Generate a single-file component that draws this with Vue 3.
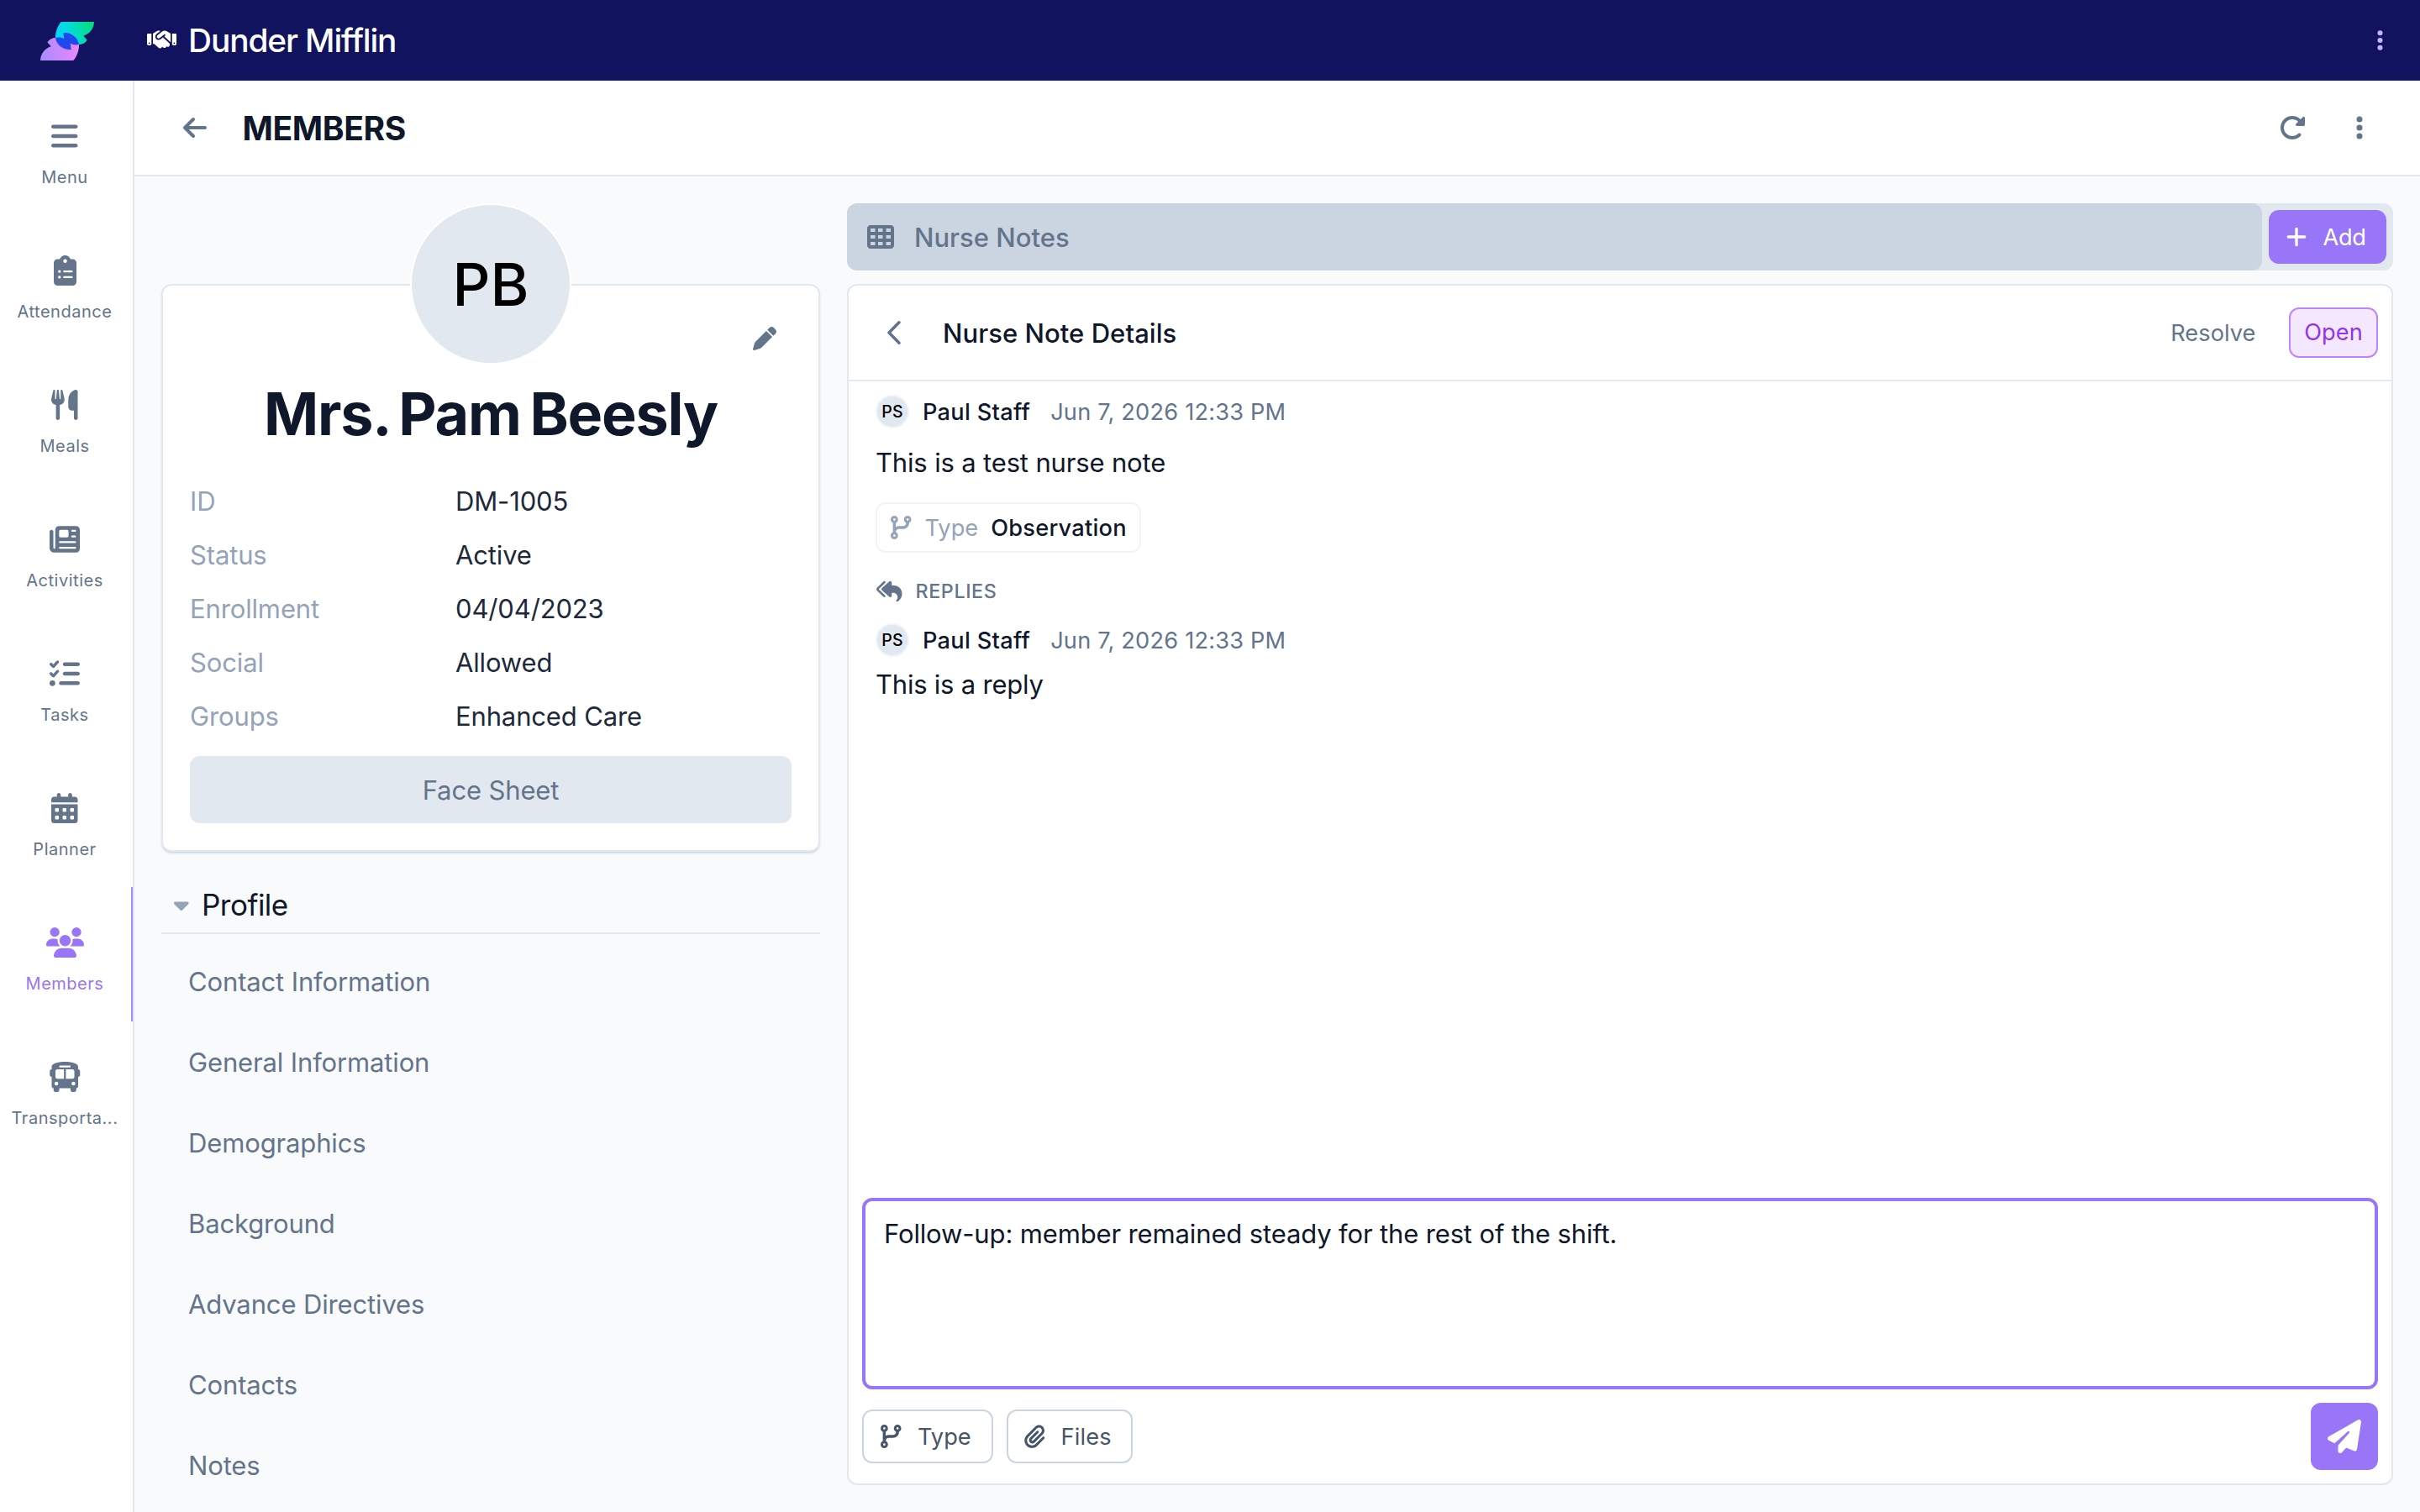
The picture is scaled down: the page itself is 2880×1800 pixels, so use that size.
<script setup>
import { h, ref } from 'vue'

// [width, path] on a 512 unit high grid
const icons = {
  bars: [448, 'M0 96C0 78.3 14.3 64 32 64l384 0c17.7 0 32 14.3 32 32s-14.3 32-32 32L32 128C14.3 128 0 113.7 0 96zM0 256c0-17.7 14.3-32 32-32l384 0c17.7 0 32 14.3 32 32s-14.3 32-32 32L32 288c-17.7 0-32-14.3-32-32zM448 416c0 17.7-14.3 32-32 32L32 448c-17.7 0-32-14.3-32-32s14.3-32 32-32l384 0c17.7 0 32 14.3 32 32z'],
  clipboard: [384, 'M192 0c-41.8 0-77.4 26.7-90.5 64L64 64C28.7 64 0 92.7 0 128L0 448c0 35.3 28.7 64 64 64l256 0c35.3 0 64-28.7 64-64l0-320c0-35.3-28.7-64-64-64l-37.5 0C269.4 26.7 233.8 0 192 0zm0 64a32 32 0 1 1 0 64 32 32 0 1 1 0-64zM72 272a24 24 0 1 1 48 0 24 24 0 1 1 -48 0zm104-16l128 0c8.8 0 16 7.2 16 16s-7.2 16-16 16l-128 0c-8.8 0-16-7.2-16-16s7.2-16 16-16zM72 368a24 24 0 1 1 48 0 24 24 0 1 1 -48 0zm88 0c0-8.8 7.2-16 16-16l128 0c8.8 0 16 7.2 16 16s-7.2 16-16 16l-128 0c-8.8 0-16-7.2-16-16z'],
  utensils: [448, 'M416 0C400 0 288 32 288 176l0 112c0 35.3 28.7 64 64 64l32 0 0 128c0 17.7 14.3 32 32 32s32-14.3 32-32l0-128 0-112 0-208c0-17.7-14.3-32-32-32zM64 16C64 7.8 57.9 1 49.7 .1S34.2 4.6 32.4 12.5L2.1 148.8C.7 155.1 0 161.5 0 167.9c0 45.9 35.1 83.6 80 87.7L80 480c0 17.7 14.3 32 32 32s32-14.3 32-32l0-224.4c44.9-4.1 80-41.8 80-87.7c0-6.4-.7-12.8-2.1-19.1L191.6 12.5c-1.8-8-9.3-13.3-17.4-12.4S160 7.8 160 16l0 134.2c0 5.4-4.4 9.8-9.8 9.8c-5.1 0-9.3-3.9-9.8-9L127.9 14.6C127.2 6.3 120.3 0 112 0s-15.2 6.3-15.9 14.6L83.7 151c-.5 5.1-4.7 9-9.8 9c-5.4 0-9.8-4.4-9.8-9.8L64 16z'],
  newspaper: [512, 'M96 96c0-35.3 28.7-64 64-64l288 0c35.3 0 64 28.7 64 64l0 320c0 35.3-28.7 64-64 64L80 480c-44.2 0-80-35.8-80-80L0 128c0-17.7 14.3-32 32-32s32 14.3 32 32l0 272c0 8.8 7.2 16 16 16s16-7.2 16-16L96 96zm64 24l0 80c0 13.3 10.7 24 24 24l112 0c13.3 0 24-10.7 24-24l0-80c0-13.3-10.7-24-24-24L184 96c-13.3 0-24 10.7-24 24zm208-8c0 8.8 7.2 16 16 16l48 0c8.8 0 16-7.2 16-16s-7.2-16-16-16l-48 0c-8.8 0-16 7.2-16 16zm0 96c0 8.8 7.2 16 16 16l48 0c8.8 0 16-7.2 16-16s-7.2-16-16-16l-48 0c-8.8 0-16 7.2-16 16zM160 304c0 8.8 7.2 16 16 16l256 0c8.8 0 16-7.2 16-16s-7.2-16-16-16l-256 0c-8.8 0-16 7.2-16 16zm0 96c0 8.8 7.2 16 16 16l256 0c8.8 0 16-7.2 16-16s-7.2-16-16-16l-256 0c-8.8 0-16 7.2-16 16z'],
  tasks: [512, 'M152.1 38.2c9.9 8.9 10.7 24 1.8 33.9l-72 80c-4.4 4.9-10.6 7.8-17.2 7.9s-12.9-2.4-17.6-7L7 113C-2.3 103.6-2.3 88.4 7 79s24.6-9.4 33.9 0l22.1 22.1 55.1-61.2c8.9-9.9 24-10.7 33.9-1.8zm0 160c9.9 8.9 10.7 24 1.8 33.9l-72 80c-4.4 4.9-10.6 7.8-17.2 7.9s-12.9-2.4-17.6-7L7 273c-9.4-9.4-9.4-24.6 0-33.9s24.6-9.4 33.9 0l22.1 22.1 55.1-61.2c8.9-9.9 24-10.7 33.9-1.8zM224 96c0-17.7 14.3-32 32-32l224 0c17.7 0 32 14.3 32 32s-14.3 32-32 32l-224 0c-17.7 0-32-14.3-32-32zm0 160c0-17.7 14.3-32 32-32l224 0c17.7 0 32 14.3 32 32s-14.3 32-32 32l-224 0c-17.7 0-32-14.3-32-32zM160 416c0-17.7 14.3-32 32-32l288 0c17.7 0 32 14.3 32 32s-14.3 32-32 32l-288 0c-17.7 0-32-14.3-32-32zM48 368a48 48 0 1 1 0 96 48 48 0 1 1 0-96z'],
  calendar: [448, 'M128 0c17.7 0 32 14.3 32 32l0 32 128 0 0-32c0-17.7 14.3-32 32-32s32 14.3 32 32l0 32 48 0c26.5 0 48 21.5 48 48l0 48L0 160l0-48C0 85.5 21.5 64 48 64l48 0 0-32c0-17.7 14.3-32 32-32zM0 192l448 0 0 272c0 26.5-21.5 48-48 48L48 512c-26.5 0-48-21.5-48-48L0 192zm64 80l0 32c0 8.8 7.2 16 16 16l32 0c8.8 0 16-7.2 16-16l0-32c0-8.8-7.2-16-16-16l-32 0c-8.8 0-16 7.2-16 16zm128 0l0 32c0 8.8 7.2 16 16 16l32 0c8.8 0 16-7.2 16-16l0-32c0-8.8-7.2-16-16-16l-32 0c-8.8 0-16 7.2-16 16zm144-16c-8.8 0-16 7.2-16 16l0 32c0 8.8 7.2 16 16 16l32 0c8.8 0 16-7.2 16-16l0-32c0-8.8-7.2-16-16-16l-32 0zM64 400l0 32c0 8.8 7.2 16 16 16l32 0c8.8 0 16-7.2 16-16l0-32c0-8.8-7.2-16-16-16l-32 0c-8.8 0-16 7.2-16 16zm144-16c-8.8 0-16 7.2-16 16l0 32c0 8.8 7.2 16 16 16l32 0c8.8 0 16-7.2 16-16l0-32c0-8.8-7.2-16-16-16l-32 0zm112 16l0 32c0 8.8 7.2 16 16 16l32 0c8.8 0 16-7.2 16-16l0-32c0-8.8-7.2-16-16-16l-32 0c-8.8 0-16 7.2-16 16z'],
  users: [640, 'M144 0a80 80 0 1 1 0 160A80 80 0 1 1 144 0zM512 0a80 80 0 1 1 0 160A80 80 0 1 1 512 0zM0 298.7C0 239.8 47.8 192 106.7 192l42.7 0c15.9 0 31 3.5 44.6 9.7c-1.3 7.2-1.9 14.7-1.9 22.3c0 38.2 16.8 72.5 43.3 96c-.2 0-.4 0-.7 0L21.3 320C9.6 320 0 310.4 0 298.7zM405.3 320c-.2 0-.4 0-.7 0c26.6-23.5 43.3-57.8 43.3-96c0-7.6-.7-15-1.9-22.3c13.6-6.3 28.7-9.7 44.6-9.7l42.7 0C592.2 192 640 239.8 640 298.7c0 11.8-9.6 21.3-21.3 21.3l-213.3 0zM224 224a96 96 0 1 1 192 0 96 96 0 1 1 -192 0zM128 485.3C128 411.7 187.7 352 261.3 352l117.3 0C452.3 352 512 411.7 512 485.3c0 14.7-11.9 26.7-26.7 26.7l-330.7 0c-14.7 0-26.7-11.9-26.7-26.7z'],
  bus: [576, 'M288 0C422.4 0 512 35.2 512 80l0 16 0 32c17.7 0 32 14.3 32 32l0 64c0 17.7-14.3 32-32 32l0 160c0 17.7-14.3 32-32 32l0 32c0 17.7-14.3 32-32 32l-32 0c-17.7 0-32-14.3-32-32l0-32-192 0 0 32c0 17.7-14.3 32-32 32l-32 0c-17.7 0-32-14.3-32-32l0-32c-17.7 0-32-14.3-32-32l0-160c-17.7 0-32-14.3-32-32l0-64c0-17.7 14.3-32 32-32l0-32 0-16C64 35.2 153.6 0 288 0zM128 160l0 96c0 17.7 14.3 32 32 32l112 0 0-160-112 0c-17.7 0-32 14.3-32 32zM304 288l112 0c17.7 0 32-14.3 32-32l0-96c0-17.7-14.3-32-32-32l-112 0 0 160zM144 400a32 32 0 1 0 0-64 32 32 0 1 0 0 64zm288 0a32 32 0 1 0 0-64 32 32 0 1 0 0 64zM384 80c0-8.8-7.2-16-16-16L208 64c-8.8 0-16 7.2-16 16s7.2 16 16 16l160 0c8.8 0 16-7.2 16-16z'],
  handshake: [640, 'M323.4 85.2l-96.8 78.4c-16.1 13-19.2 36.4-7 53.1c12.9 17.8 38 21.3 55.3 7.8l99.3-77.2c7-5.4 17-4.2 22.5 2.8s4.2 17-2.8 22.5l-20.9 16.2L512 316.8 512 128l-.7 0-3.9-2.5L434.8 79c-15.3-9.8-33.2-15-51.4-15c-21.8 0-43 7.5-60 21.2zm22.8 124.4l-51.7 40.2C263 274.3 217.3 268 193.7 235.6c-22.2-30.5-16.6-73.1 12.7-96.8l83.2-67.3c-11.6-4.9-24.1-7.4-36.8-7.4C234 64 215.7 69.6 200 80l-72 48 0 224 28.2 0 91.4 83.4c19.6 17.9 49.9 16.5 67.8-3.1c5.5-6.1 9.2-13.2 11.1-20.6l17 15.6c19.5 17.9 49.9 16.6 67.8-2.9c4.5-4.9 7.8-10.6 9.9-16.5c19.4 13 45.8 10.3 62.1-7.5c17.9-19.5 16.6-49.9-2.9-67.8l-134.2-123zM16 128c-8.8 0-16 7.2-16 16L0 352c0 17.7 14.3 32 32 32l32 0c17.7 0 32-14.3 32-32l0-224-80 0zM48 320a16 16 0 1 1 0 32 16 16 0 1 1 0-32zM544 128l0 224c0 17.7 14.3 32 32 32l32 0c17.7 0 32-14.3 32-32l0-208c0-8.8-7.2-16-16-16l-80 0zm32 208a16 16 0 1 1 32 0 16 16 0 1 1 -32 0z'],
  arrowLeft: [448, 'M9.4 233.4c-12.5 12.5-12.5 32.8 0 45.3l160 160c12.5 12.5 32.8 12.5 45.3 0s12.5-32.8 0-45.3L109.2 288 416 288c17.7 0 32-14.3 32-32s-14.3-32-32-32l-306.7 0L214.6 118.6c12.5-12.5 12.5-32.8 0-45.3s-32.8-12.5-45.3 0l-160 160z'],
  refresh: [512, 'M463.5 224l8.5 0c13.3 0 24-10.7 24-24l0-128c0-9.7-5.8-18.5-14.8-22.2s-19.3-1.7-26.2 5.2L413.4 96.6c-87.6-86.5-228.7-86.2-315.8 1c-87.5 87.5-87.5 229.3 0 316.8s229.3 87.5 316.8 0c12.5-12.5 12.5-32.8 0-45.3s-32.8-12.5-45.3 0c-62.5 62.5-163.8 62.5-226.3 0s-62.5-163.8 0-226.3c62.2-62.2 162.7-62.5 225.3-1L327 183c-6.9 6.9-8.9 17.2-5.2 26.2s12.5 14.8 22.2 14.8l119.5 0z'],
  dots: [128, 'M64 360a56 56 0 1 0 0 112 56 56 0 1 0 0-112zm0-160a56 56 0 1 0 0 112 56 56 0 1 0 0-112zM120 96A56 56 0 1 0 8 96a56 56 0 1 0 112 0z'],
  pen: [512, 'M362.7 19.3L314.3 67.7 444.3 197.7l48.4-48.4c25-25 25-65.5 0-90.5L453.3 19.3c-25-25-65.5-25-90.5 0zm-71 71L58.6 323.5c-10.4 10.4-18 23.3-22.2 37.4L1 481.2C-1.5 489.7 .8 498.8 7 505s15.3 8.5 23.7 6.1l120.3-35.4c14.1-4.2 27-11.8 37.4-22.2L421.7 220.3 291.7 90.3z'],
  caret: [320, 'M137.4 374.6c12.5 12.5 32.8 12.5 45.3 0l128-128c9.2-9.2 11.9-22.9 6.9-34.9s-16.6-19.8-29.6-19.8L32 192c-12.9 0-24.6 7.8-29.6 19.8s-2.2 25.7 6.9 34.9l128 128z'],
  table: [512, 'M64 32C28.7 32 0 60.7 0 96L0 416c0 35.3 28.7 64 64 64l384 0c35.3 0 64-28.7 64-64l0-320c0-35.3-28.7-64-64-64L64 32zm88 64l0 64-88 0 0-64 88 0zm56 0l88 0 0 64-88 0 0-64zm240 0l0 64-88 0 0-64 88 0zM64 224l88 0 0 64-88 0 0-64zm232 0l0 64-88 0 0-64 88 0zm64 0l88 0 0 64-88 0 0-64zM152 352l0 64-88 0 0-64 88 0zm56 0l88 0 0 64-88 0 0-64zm240 0l0 64-88 0 0-64 88 0z'],
  branch: [448, 'M80 104a24 24 0 1 0 0-48 24 24 0 1 0 0 48zm80-24c0 32.8-19.7 61-48 73.3l0 87.8c18.8-10.9 40.7-17.1 64-17.1l96 0c35.3 0 64-28.7 64-64l0-6.7C307.7 141 288 112.8 288 80c0-44.2 35.8-80 80-80s80 35.8 80 80c0 32.8-19.7 61-48 73.3l0 6.7c0 70.7-57.3 128-128 128l-96 0c-35.3 0-64 28.7-64 64l0 6.7c28.3 12.3 48 40.5 48 73.3c0 44.2-35.8 80-80 80s-80-35.8-80-80c0-32.8 19.7-61 48-73.3l0-6.7 0-198.7C19.7 141 0 112.8 0 80C0 35.8 35.8 0 80 0s80 35.8 80 80zm232 0a24 24 0 1 0 -48 0 24 24 0 1 0 48 0zM80 456a24 24 0 1 0 0-48 24 24 0 1 0 0 48z'],
  replyAll: [576, 'M209.4 39.5c-9.1-9.6-24.3-10-33.9-.9L33.8 173.2c-19.9 18.9-19.9 50.7 0 69.6L175.5 377.4c9.6 9.1 24.8 8.7 33.9-.9s8.7-24.8-.9-33.9L66.8 208 208.5 73.4c9.6-9.1 10-24.3 .9-33.9zM352 64c0-12.6-7.4-24.1-19-29.2s-25-3-34.4 5.4l-160 144c-6.7 6.1-10.6 14.7-10.6 23.8s3.9 17.7 10.6 23.8l160 144c9.4 8.5 22.9 10.6 34.4 5.4s19-16.6 19-29.2l0-64 32 0c53 0 96 43 96 96c0 30.4-12.8 47.9-22.2 56.7c-5.5 5.1-9.8 12-9.8 19.5c0 10.9 8.8 19.7 19.7 19.7c2.8 0 5.6-.6 8.1-1.9C494.5 467.9 576 417.3 576 304c0-97.2-78.8-176-176-176l-48 0 0-64z'],
  paperclip: [448, 'M364.2 83.8c-24.4-24.4-64-24.4-88.4 0l-184 184c-42.1 42.1-42.1 110.3 0 152.4s110.3 42.1 152.4 0l152-152c10.9-10.9 28.7-10.9 39.6 0s10.9 28.7 0 39.6l-152 152c-64 64-167.6 64-231.6 0s-64-167.6 0-231.6l184-184c46.3-46.3 121.3-46.3 167.6 0s46.3 121.3 0 167.6l-176 176c-28.6 28.6-75 28.6-103.6 0s-28.6-75 0-103.6l144-144c10.9-10.9 28.7-10.9 39.6 0s10.9 28.7 0 39.6l-144 144c-6.7 6.7-6.7 17.7 0 24.4s17.7 6.7 24.4 0l176-176c24.4-24.4 24.4-64 0-88.4z'],
  send: [512, 'M498.1 5.6c10.1 7 15.4 19.1 13.5 31.2l-64 416c-1.5 9.7-7.4 18.2-16 23s-18.9 5.4-28 1.6L284 427.7l-68.5 74.1c-8.9 9.7-22.9 12.9-35.2 8.1S160 493.2 160 480l0-83.6c0-4 1.5-7.8 4.2-10.8L331.8 202.8c5.8-6.3 5.6-16-.4-22s-15.7-6.4-22-.7L106 360.8 17.7 316.6C7.1 311.3 .3 300.7 0 288.9s5.9-22.8 16.1-28.7l448-256c10.7-6.1 23.9-5.5 34 1.4z'],
}

function Icon({ name, size }) {
  const [width, d] = icons[name]
  return h('svg', {
    width: (width * size) / 512,
    height: size,
    viewBox: `0 0 ${width} 512`,
    fill: 'currentColor',
    'aria-hidden': 'true',
  }, [h('path', { d })])
}
Icon.props = ['name', 'size']

const nav = [
  { label: 'Menu', icon: 'bars' },
  { label: 'Attendance', icon: 'clipboard' },
  { label: 'Meals', icon: 'utensils' },
  { label: 'Activities', icon: 'newspaper' },
  { label: 'Tasks', icon: 'tasks' },
  { label: 'Planner', icon: 'calendar' },
  { label: 'Members', icon: 'users', active: true },
  { label: 'Transporta...', icon: 'bus' },
]

const details = [
  { label: 'ID', value: 'DM-1005' },
  { label: 'Status', value: 'Active' },
  { label: 'Enrollment', value: '04/04/2023' },
  { label: 'Social', value: 'Allowed' },
  { label: 'Groups', value: 'Enhanced Care' },
]

const sections = [
  'Contact Information',
  'General Information',
  'Demographics',
  'Background',
  'Advance Directives',
  'Contacts',
  'Notes',
]

const reply = ref('Follow-up: member remained steady for the rest of the shift.')
</script>

<template>
  <div class="app">
    <header class="topbar">
      <svg class="logo" width="64" height="46" viewBox="24 30 192 138">
        <defs>
          <linearGradient id="leaf-top" x1="80" y1="90" x2="210" y2="40" gradientUnits="userSpaceOnUse">
            <stop offset="0" stop-color="#00d5ff" />
            <stop offset="0.35" stop-color="#05d9e0" />
            <stop offset="1" stop-color="#00e07a" />
          </linearGradient>
          <linearGradient id="leaf-bottom" x1="24" y1="150" x2="160" y2="130" gradientUnits="userSpaceOnUse">
            <stop offset="0" stop-color="#a98bff" />
            <stop offset="1" stop-color="#e888fb" />
          </linearGradient>
        </defs>
        <path fill="url(#leaf-top)" d="M98 30H216C215 54 200 73 178 80L191 95C184 106 172 111 162 111L78 88C77 66 86 44 98 30Z" />
        <path fill="url(#leaf-bottom)" d="M142 168H24C25 144 40 125 62 118L49 103C56 92 68 87 78 87L162 110C163 132 154 154 142 168Z" />
        <path fill="#2148ef" d="M78 88C88 84 98 86 109 91L106 69C132 66 158 84 162 110C152 114 142 112 131 107L134 129C108 132 82 114 78 88Z" />
      </svg>
      <div class="org">
        <Icon name="handshake" :size="28" />
        <span>Dunder Mifflin</span>
      </div>
      <Icon class="more" name="dots" :size="28" />
    </header>

    <div class="body">
      <nav class="sidebar">
        <a v-for="item in nav" :key="item.label" class="nav-item" :class="{ active: item.active }">
          <Icon :name="item.icon" :size="36" />
          <span>{{ item.label }}</span>
        </a>
      </nav>

      <div class="main">
        <div class="toolbar">
          <Icon name="arrowLeft" :size="32" />
          <h1>MEMBERS</h1>
          <Icon name="refresh" :size="32" />
          <Icon class="toolbar-more" name="dots" :size="32" />
        </div>

        <div class="content">
          <aside class="profile">
            <div class="card">
              <div class="avatar">PB</div>
              <Icon class="edit" name="pen" :size="28" />
              <h2>Mrs. Pam Beesly</h2>
              <dl>
                <div v-for="row in details" :key="row.label" class="row">
                  <dt>{{ row.label }}</dt>
                  <dd>{{ row.value }}</dd>
                </div>
              </dl>
              <button class="face-sheet">Face Sheet</button>
            </div>

            <div class="section-title">
              <Icon name="caret" :size="28" />
              <span>Profile</span>
            </div>
            <a v-for="section in sections" :key="section" class="section-link">{{ section }}</a>
          </aside>

          <section class="notes">
            <div class="tabbar">
              <div class="tab">
                <Icon name="table" :size="32" />
                <span>Nurse Notes</span>
              </div>
              <button class="add">
                <svg width="24" height="24" viewBox="0 0 24 24" fill="none" stroke="currentColor" stroke-width="3.3" stroke-linecap="round">
                  <path d="M12 2.3v19.4M2.3 12h19.4" />
                </svg>
                <span>Add</span>
              </button>
            </div>

            <div class="panel">
              <div class="panel-head">
                <svg width="18" height="30" viewBox="0 0 18 30" fill="none" stroke="currentColor" stroke-width="3.6" stroke-linecap="round" stroke-linejoin="round">
                  <path d="M15 2.8 3 15l12 12.2" />
                </svg>
                <h3>Nurse Note Details</h3>
                <span class="resolve">Resolve</span>
                <span class="open">Open</span>
              </div>

              <div class="thread">
                <div class="author">
                  <span class="initials">PS</span>
                  <b>Paul Staff</b>
                  <time>Jun 7, 2026 12:33 PM</time>
                </div>
                <p class="note">This is a test nurse note</p>
                <div class="chip">
                  <Icon name="branch" :size="28" />
                  <span>Type</span>
                  <b>Observation</b>
                </div>
                <div class="replies">
                  <Icon name="replyAll" :size="28" />
                  <span>REPLIES</span>
                </div>
                <div class="author">
                  <span class="initials">PS</span>
                  <b>Paul Staff</b>
                  <time>Jun 7, 2026 12:33 PM</time>
                </div>
                <p class="note reply">This is a reply</p>
              </div>

              <div class="composer">
                <textarea v-model="reply" spellcheck="false"></textarea>
                <div class="actions">
                  <button class="action">
                    <Icon name="branch" :size="28" />
                    <span>Type</span>
                  </button>
                  <button class="action files">
                    <Icon name="paperclip" :size="28" />
                    <span>Files</span>
                  </button>
                  <button class="send">
                    <Icon name="send" :size="40" />
                  </button>
                </div>
              </div>
            </div>
          </section>
        </div>
      </div>
    </div>
  </div>
</template>

<style>
body {
  margin: 0;
  overflow: hidden;
}
</style>

<style scoped>
* {
  box-sizing: border-box;
  margin: 0;
}

svg {
  display: block;
  flex: none;
}

button,
textarea {
  font: inherit;
  letter-spacing: inherit;
  border: 0;
}

.app {
  display: flex;
  flex-direction: column;
  height: 1800px;
  overflow: hidden;
  background: #f8fafc;
  color: #0f172a;
  font-family: Inter, "Liberation Sans", sans-serif;
  font-size: 31px;
  letter-spacing: -0.14px;
  white-space: nowrap;
}

.topbar {
  display: flex;
  align-items: center;
  flex: none;
  height: 96px;
  padding: 0 44.5px 0 48px;
  background: #12135f;
  color: white;
}

.logo {
  margin-top: 2px;
}

.org {
  display: flex;
  align-items: center;
  gap: 14.5px;
  margin: -2px 0 0 62.5px;
  font-size: 38.8px;
  font-weight: 500;
  letter-spacing: -1.1px;
}

.more {
  margin-left: auto;
  color: #c4b5fd;
}

.body {
  display: flex;
  flex: 1;
  min-height: 0;
}

.sidebar {
  flex: none;
  width: 160px;
  background: white;
  border-right: 2px solid #e2e8f0;
}

.nav-item {
  display: flex;
  flex-direction: column;
  align-items: center;
  gap: 17px;
  height: 160px;
  padding: 48px 2px 0 0;
  border-right: 2px solid transparent;
  color: #64748b;
  font-size: 20px;
  line-height: 28px;
  letter-spacing: 0.52px;
}

.nav-item.active {
  color: #9975f7;
  border-right-color: #a78bfa;
}

.main {
  display: flex;
  flex-direction: column;
  flex: 1;
  min-width: 0;
}

.toolbar {
  display: flex;
  align-items: center;
  flex: none;
  height: 114px;
  padding: 0 68px 0 58px;
  background: white;
  border-bottom: 2px solid #e2e8f0;
  color: #64748b;
}

.toolbar h1 {
  margin: 0 auto 0 42.5px;
  color: #0f172a;
  font-size: 39px;
  font-weight: 700;
  letter-spacing: -0.35px;
}

.toolbar-more {
  margin-left: 60px;
}

.content {
  display: flex;
  gap: 32px;
  flex: 1;
  min-height: 0;
  padding: 32px;
}

.profile {
  flex: none;
  width: 784px;
}

.card {
  position: relative;
  margin-top: 96px;
  padding: 0 32px 32px;
  background: white;
  border: 2px solid #e2e8f0;
  border-radius: 12px;
  box-shadow: 0 2px 3px -1px #b6c7d9;
}

.avatar {
  display: flex;
  align-items: center;
  justify-content: center;
  width: 192px;
  height: 192px;
  margin: -98px auto 19px;
  background: #e2e8f0;
  border: 2px solid white;
  border-radius: 50%;
  color: black;
  font-size: 70px;
  font-weight: 500;
  letter-spacing: 0;
}

.edit {
  position: absolute;
  top: 49px;
  right: 50px;
  color: #64748b;
}

.card h2 {
  margin-bottom: 32px;
  font-size: 70px;
  font-weight: 700;
  line-height: 80px;
  letter-spacing: -1.2px;
  word-spacing: -4.5px;
  text-align: center;
}

.row {
  display: grid;
  grid-template-columns: 316px 1fr;
  line-height: 64px;
}

.row dt {
  color: #94a3b8;
}

.row dd {
  color: #1e293b;
}

.face-sheet {
  display: block;
  width: 100%;
  height: 80px;
  margin-top: 15px;
  background: #e2e8f0;
  border-radius: 12px;
  color: #64748b;
}

.section-title {
  display: flex;
  align-items: center;
  gap: 15.5px;
  height: 68px;
  margin: 30px 0 9px;
  padding-left: 15px;
  border-bottom: 2px solid #e2e8f0;
  font-size: 35px;
  letter-spacing: -0.5px;
}

.section-title svg {
  color: #94a3b8;
}

.section-link {
  display: block;
  padding-left: 32px;
  color: #64748b;
  line-height: 96px;
}

.notes {
  display: flex;
  flex-direction: column;
  gap: 16px;
  flex: 1;
  min-width: 0;
}

.tabbar {
  display: flex;
  align-items: center;
  gap: 8px;
  height: 80px;
  padding-right: 8px;
  background: #e2e8f0;
  border-radius: 12px;
}

.tab {
  display: flex;
  align-items: center;
  gap: 24px;
  flex: 1;
  height: 80px;
  padding-left: 24px;
  background: #cbd5e1;
  border-radius: 12px;
  color: #64748b;
  font-weight: 500;
  letter-spacing: 0;
}

.add {
  display: flex;
  align-items: center;
  gap: 20px;
  width: 140px;
  height: 64px;
  padding: 0 0 0 20.5px;
  background: #9975f7;
  border-radius: 12px;
  color: white;
  font-size: 27.2px;
  letter-spacing: -0.3px;
}

.panel {
  display: flex;
  flex-direction: column;
  flex: 1;
  background: white;
  border: 2px solid #e2e8f0;
  border-radius: 12px;
}

.panel-head {
  display: flex;
  align-items: center;
  height: 114px;
  padding: 0 16px 0 45px;
  border-bottom: 2px solid #e2e8f0;
  color: #64748b;
  font-size: 27.2px;
  letter-spacing: 0.05px;
}

.panel-head h3 {
  margin: 0 auto 0 49px;
  color: #0f172a;
  font-size: 31px;
  font-weight: 500;
}

.resolve {
  margin-right: 39.5px;
}

.open {
  width: 106px;
  height: 60px;
  background: #f3e8ff;
  border: 2px solid #c084fc;
  border-radius: 12px;
  color: #9333ea;
  line-height: 56px;
  text-align: center;
}

.thread {
  flex: 1;
  padding: 16px 32px;
}

.author {
  display: flex;
  align-items: center;
  height: 40px;
  font-size: 27.2px;
  letter-spacing: 0.2px;
}

.author b {
  margin: 0 24px 0 16px;
  font-weight: 500;
  letter-spacing: 0.3px;
}

.author time {
  color: #64748b;
}

.initials {
  width: 40px;
  height: 40px;
  background: #e2e8f0;
  border: 2px solid #f1f5f9;
  border-radius: 50%;
  color: black;
  font-size: 19.5px;
  font-weight: 500;
  line-height: 36px;
  text-align: center;
}

.note {
  margin-top: 17px;
  line-height: 48px;
  letter-spacing: -0.16px;
}

.note.reply {
  margin-top: 9px;
  letter-spacing: -0.22px;
}

.chip {
  display: flex;
  align-items: center;
  width: 316px;
  height: 60px;
  margin: 23px 0 30px;
  padding-left: 16px;
  border: 2px solid #f1f5f9;
  border-radius: 12px;
  color: #94a3b8;
  font-size: 27.2px;
  letter-spacing: 0;
}

.chip span {
  margin: 0 15px 0 16px;
}

.chip b {
  color: #0f172a;
  font-weight: 500;
  letter-spacing: 0.25px;
}

.replies {
  display: flex;
  align-items: center;
  gap: 16px;
  height: 31px;
  margin-bottom: 23px;
  color: #64748b;
  font-size: 23.3px;
  font-weight: 500;
  letter-spacing: 0.6px;
}

.composer {
  padding: 0 16px 16px;
}

.composer textarea {
  display: block;
  width: 100%;
  height: 228px;
  padding: 15px 22px;
  background: white;
  border: 4px solid #9975f7;
  border-radius: 12px;
  outline: none;
  resize: none;
  color: #0f172a;
  line-height: 48px;
}

.actions {
  display: flex;
  align-items: center;
  gap: 16px;
  margin-top: 16px;
}

.action {
  display: flex;
  align-items: center;
  gap: 19.5px;
  width: 156px;
  height: 64px;
  padding: 0 0 0 20px;
  background: white;
  border: 2px solid #cbd5e1;
  border-radius: 12px;
  color: #475569;
  font-size: 27.2px;
  letter-spacing: 0;
}

.action.files {
  gap: 19px;
  width: 150px;
  padding-left: 19px;
  letter-spacing: 0.2px;
}

.send {
  display: flex;
  align-items: center;
  justify-content: center;
  width: 80px;
  height: 80px;
  margin-left: auto;
  padding: 0;
  background: #9975f7;
  border-radius: 12px;
  color: white;
}
</style>
